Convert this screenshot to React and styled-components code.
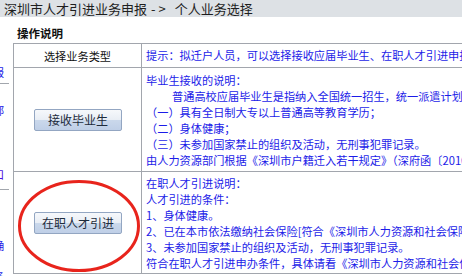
import styled, { createGlobalStyle } from "styled-components"

const Global = createGlobalStyle`
  html, body {
    margin: 0;
    padding: 0;
    background: #fff;
    overflow: hidden;
  }
  body {
    width: 462px;
    height: 276px;
    font-family: "Noto Sans CJK SC", "Noto Sans", sans-serif;
  }
`

const TitleBar = styled.div`
  height: 17px;
  line-height: 17px;
  background: #dde1e5;
  color: #1e1e1e;
  font-size: 13px;
  padding-left: 4px;
  white-space: nowrap;
`

const Arrow = styled.span`
  margin: 0 6px 0 4px;
  letter-spacing: 3px;
`

const Main = styled.div`
  display: flex;
  align-items: flex-start;
`

const Sliver = styled.div`
  width: 9px;
  flex: none;
  display: flex;
  flex-direction: column;
  overflow: hidden;
  padding-top: 43px;
`

const SliverCell = styled.div`
  height: ${p => p.$h}px;
  border-bottom: ${p => (p.$line ? "1px solid #a2a6ad" : "none")};
  position: relative;
  overflow: hidden;
`

const SliverChar = styled.span`
  position: absolute;
  left: -7px;
  top: ${p => p.$top}px;
  font-size: 11.2px;
  line-height: 12px;
  color: ${p => p.$color || "#1c1ce8"};
`

const Content = styled.div`
  padding-left: 4px;
  flex: none;
`

const SectionTitle = styled.div`
  height: 26px;
  padding: 0 0 0 4px;
  box-sizing: border-box;
  display: flex;
  align-items: flex-end;
  padding-bottom: 2px;
  font-size: 11.5px;
  font-weight: bold;
  color: #111;
`

const Grid = styled.div`
  display: grid;
  grid-template-columns: 128px 700px;
  border-top: 1px solid #a2a6ad;
  border-left: 1px solid #a2a6ad;
`

const Cell = styled.div`
  border-right: 1px solid #a2a6ad;
  border-bottom: 1px solid #a2a6ad;
  box-sizing: border-box;
  height: ${p => p.$h}px;
  position: relative;
`

const HeadLabel = styled(Cell)`
  display: flex;
  align-items: center;
  justify-content: center;
  font-size: 11.2px;
  color: #111;
`

const ButtonCell = styled(Cell)`
  display: flex;
  align-items: center;
  justify-content: center;
`

const TextCell = styled(Cell)`
  padding: ${p => p.$pt || 4}px 0 0 4px;
  font-size: 11.2px;
  line-height: 16px;
  color: #1c1ce8;
  white-space: nowrap;
  overflow: hidden;
`

const Line = styled.div`
  padding-left: ${p => p.$indent || 0}px;
`

const ActionButton = styled.button`
  width: 88px;
  height: 22px;
  margin-left: 1px;
  border: 1px solid #93a6c2;
  border-radius: 2px;
  background: linear-gradient(#f6f8fb 0%, #e9eef5 48%, #cad8eb 52%, #bfcfe7 100%);
  color: #1d2b3c;
  font-family: "Noto Sans CJK SC", sans-serif;
  font-size: 12px;
  padding: 0;
  cursor: pointer;
`

const Mark = styled.svg`
  position: absolute;
  left: 3px;
  top: 7px;
  pointer-events: none;
`

export default function App() {
  return (
    <>
      <Global />
      <TitleBar>深圳市人才引进业务申报<Arrow>-&gt;</Arrow>个人业务选择</TitleBar>
      <Main>
        <Sliver>
          <SliverCell $h={23} $line>
            <SliverChar $top={6}>报</SliverChar>
          </SliverCell>
          <SliverCell $h={105} $line>
            <SliverChar $top={20}>部</SliverChar>
            <SliverChar $top={84} $color="#4a10e0">口</SliverChar>
          </SliverCell>
          <SliverCell $h={110}>
            <SliverChar $top={49}>确</SliverChar>
            <SliverChar $top={80}>务</SliverChar>
            <SliverChar $top={96} $color="#c04080">冂</SliverChar>
          </SliverCell>
        </Sliver>
        <Content>
          <SectionTitle>操作说明</SectionTitle>
          <Grid>
            <HeadLabel $h={24}>选择业务类型</HeadLabel>
            <TextCell $h={24} $pt={3}>
              提示：拟迁户人员，可以选择接收应届毕业生、在职人才引进申报业务。
            </TextCell>

            <ButtonCell $h={104}>
              <ActionButton>接收毕业生</ActionButton>
            </ButtonCell>
            <TextCell $h={104}>
              <Line>毕业生接收的说明：</Line>
              <Line $indent={26}>普通高校应届毕业生是指纳入全国统一招生，统一派遣计划的毕业生。</Line>
              <Line>（一）具有全日制大专以上普通高等教育学历；</Line>
              <Line>（二）身体健康；</Line>
              <Line>（三）未参加国家禁止的组织及活动，无刑事犯罪记录。</Line>
              <Line>由人力资源部门根据《深圳市户籍迁入若干规定》（深府函〔2016〕）办理。</Line>
            </TextCell>

            <ButtonCell $h={102}>
              <ActionButton>在职人才引进</ActionButton>
              <Mark width="124" height="96" viewBox="0 0 124 96">
                <ellipse cx="62" cy="47" rx="59.5" ry="44.5" fill="none" stroke="#e8241c" strokeWidth="3" />
              </Mark>
            </ButtonCell>
            <TextCell $h={102} $pt={3}>
              <Line>在职人才引进说明：</Line>
              <Line>人才引进的条件：</Line>
              <Line>1、身体健康。</Line>
              <Line>2、已在本市依法缴纳社会保险[符合《深圳市人力资源和社会保障局》规定]。</Line>
              <Line>3、未参加国家禁止的组织及活动，无刑事犯罪记录。</Line>
              <Line>符合在职人才引进申办条件，具体请看《深圳市人力资源和社会保障局》。</Line>
            </TextCell>
          </Grid>
        </Content>
      </Main>
    </>
  )
}
